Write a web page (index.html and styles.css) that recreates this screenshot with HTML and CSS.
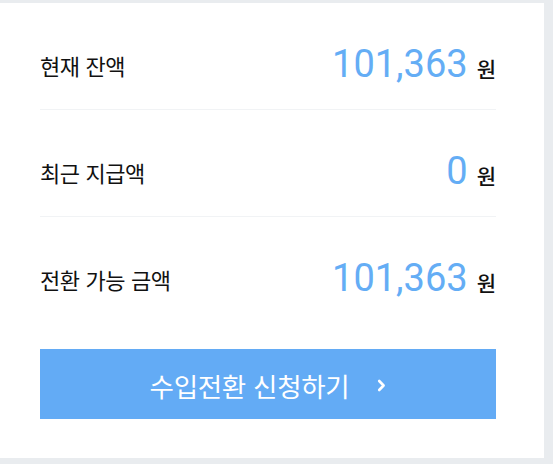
FILE: index.html
```html
<!DOCTYPE html>
<html lang="ko">
<head>
<meta charset="utf-8">
<link rel="stylesheet" href="styles.css">
</head>
<body>
<div class="card">
  <div class="row">
    <span class="label">현재 잔액</span>
    <span class="amount"><span class="num">101,363</span><span class="unit">원</span></span>
  </div>
  <div class="row">
    <span class="label">최근 지급액</span>
    <span class="amount"><span class="num">0</span><span class="unit">원</span></span>
  </div>
  <div class="row last">
    <span class="label">전환 가능 금액</span>
    <span class="amount"><span class="num">101,363</span><span class="unit">원</span></span>
  </div>
  <button class="cta">
    <span class="cta-text">수입전환 신청하기</span>
    <svg class="chev" width="9" height="13" viewBox="0 0 9 13"><path d="M2.2 2 L6.6 6.5 L2.2 11" fill="none" stroke="#fff" stroke-width="2.6" stroke-linecap="round" stroke-linejoin="round"/></svg>
  </button>
</div>
</body>
</html>
```
FILE: styles.css
```css
html, body {
  margin: 0;
  padding: 0;
  background: #e9ecef;
  font-family: "Noto Sans CJK KR", "Noto Sans", sans-serif;
}
body {
  padding-top: 3px;
  height: 464px;
  box-sizing: border-box;
}
.card {
  width: 544px;
  height: 455px;
  box-sizing: border-box;
  background: #fff;
  padding: 0 48px 0 40px;
  display: flex;
  flex-direction: column;
}
.row {
  display: flex;
  justify-content: space-between;
  align-items: center;
  height: 44px;
  padding: 39px 0 23px;
  border-bottom: 1px solid #f1f3f5;
}
.row.last {
  border-bottom: none;
  padding-bottom: 0;
}
.label {
  font-size: 22px;
  color: #111;
  letter-spacing: -0.4px;
  margin-top: 2px;
}
.amount {
  display: flex;
  align-items: baseline;
}
.num {
  font-family: Roboto, "Liberation Sans", sans-serif;
  font-size: 38px;
  color: #64adf5;
  line-height: 44px;
}
.unit {
  font-size: 21px;
  font-weight: 500;
  color: #111;
  margin-left: 9px;
}
.cta {
  margin-top: 49px;
  height: 70px;
  width: 456px;
  border: none;
  background: #63abf5;
  color: #fff;
  display: flex;
  align-items: center;
  justify-content: center;
  gap: 28px;
  padding: 2px 0 0 0;
  font-family: "Noto Sans CJK KR", "Noto Sans", sans-serif;
}
.cta-text {
  font-size: 26.5px;
  letter-spacing: -0.3px;
}
.chev {
  display: block;
}
```
